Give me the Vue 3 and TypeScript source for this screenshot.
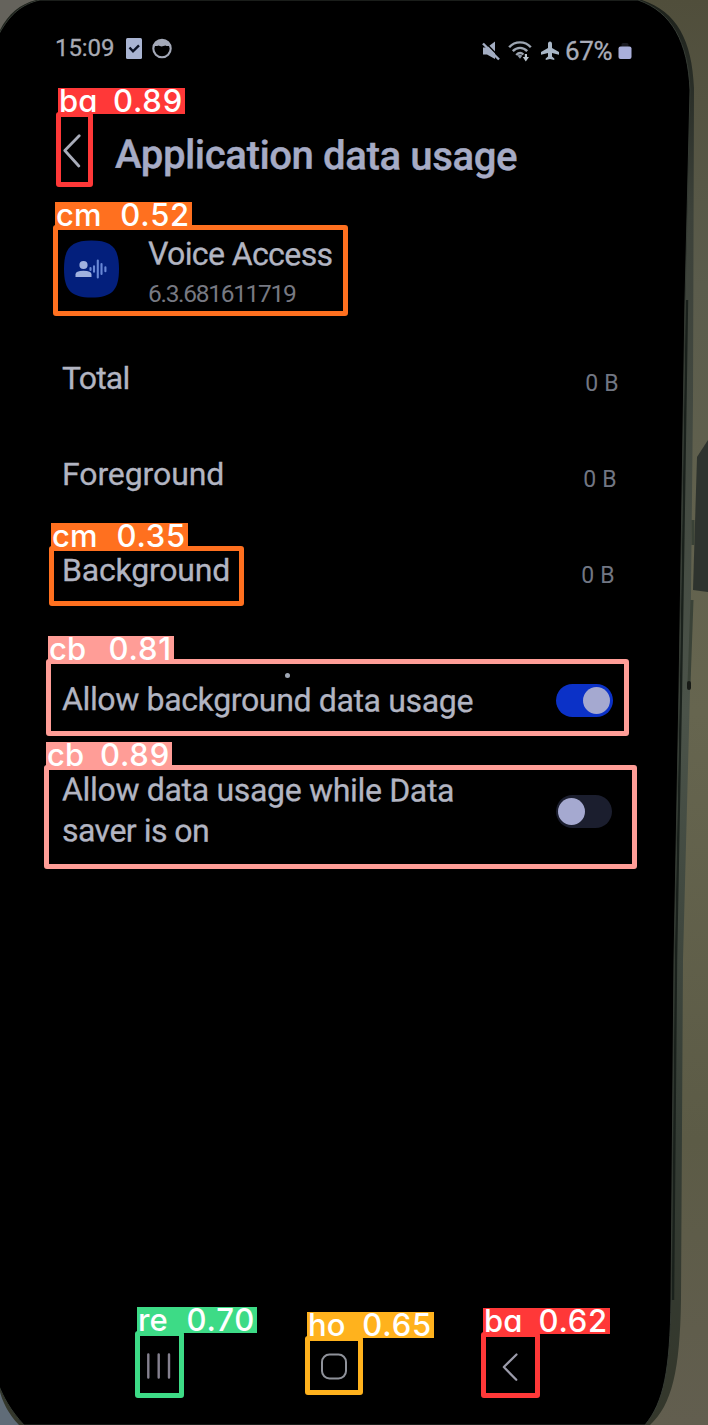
<script setup lang="ts">
interface Detection {
  id: string
  name: string
  score: string
  color: string
  x: number
  y: number
  w: number
  h: number
  labelWidth: number
  labelHeight: number
}

const detections: Detection[] = [
  { id: 'back-top', name: 'ba', score: '0.89', color: '#ff3838', x: 56, y: 112, w: 37, h: 75, labelWidth: 127, labelHeight: 26 },
  { id: 'app', name: 'cm', score: '0.52', color: '#ff701f', x: 53, y: 225, w: 295, h: 91, labelWidth: 137, labelHeight: 25 },
  { id: 'background', name: 'cm', score: '0.35', color: '#ff701f', x: 49, y: 546, w: 195, h: 60, labelWidth: 137, labelHeight: 25 },
  { id: 'allow-bg', name: 'cb', score: '0.81', color: '#ff9d97', x: 46, y: 659, w: 583, h: 77, labelWidth: 126, labelHeight: 25 },
  { id: 'allow-saver', name: 'cb', score: '0.89', color: '#ff9d97', x: 44, y: 765, w: 593, h: 104, labelWidth: 126, labelHeight: 25 },
  { id: 'recents', name: 're', score: '0.70', color: '#3ddb86', x: 135, y: 1331, w: 49, h: 67, labelWidth: 120, labelHeight: 26 },
  { id: 'home', name: 'ho', score: '0.65', color: '#ffb21d', x: 305, y: 1336, w: 58, h: 59, labelWidth: 127, labelHeight: 26 },
  { id: 'back-nav', name: 'ba', score: '0.62', color: '#ff3838', x: 481, y: 1332, w: 59, h: 66, labelWidth: 127, labelHeight: 26 },
]

const boxStyle = (d: Detection) => ({
  left: `${d.x}px`,
  top: `${d.y}px`,
  width: `${d.w}px`,
  height: `${d.h}px`,
  borderColor: d.color,
})

const labelStyle = (d: Detection) => ({
  left: `${d.x + 2}px`,
  top: `${d.y + 2 - d.labelHeight}px`,
  width: `${d.labelWidth}px`,
  height: `${d.labelHeight}px`,
  background: d.color,
})
</script>

<template>
  <div class="scene">
    <svg class="backdrop" width="708" height="1425" viewBox="0 0 708 1425" aria-hidden="true">
      <defs>
        <linearGradient id="wall" x1="0" y1="0" x2="0" y2="1">
          <stop offset="0" stop-color="#504e3b" />
          <stop offset="0.2" stop-color="#5b5c4c" />
          <stop offset="0.5" stop-color="#66654f" />
          <stop offset="0.8" stop-color="#5c5b46" />
          <stop offset="1" stop-color="#625e4f" />
        </linearGradient>
        <linearGradient id="frame" x1="0" y1="0" x2="0" y2="1">
          <stop offset="0" stop-color="#1d211b" />
          <stop offset="0.15" stop-color="#3c4139" />
          <stop offset="0.5" stop-color="#4b5349" />
          <stop offset="0.8" stop-color="#343c34" />
          <stop offset="1" stop-color="#34372b" />
        </linearGradient>
      </defs>
      <rect width="708" height="1425" fill="url(#wall)" />
      <path d="M0 0H45V40H0Z" fill="#65635c" />
      <path d="M0 1380H40V1425H0Z" fill="#606c78" />
      <path d="M708 440L697 457L693 590L708 592Z" fill="#2e332e" />
      <path d="M36 0H642C677 12 692 40 694 88L693 400L690 690L683 960L681 1300C680 1370 672 1405 650 1425H19C8 1414 2 1400 0 1392V30C8 14 20 4 36 0Z" fill="url(#frame)" />
      <path d="M687 300L681 690L676 960L673 1300" fill="none" stroke="#1a211c" stroke-width="2.4" />
      <path d="M693 520V545M692 600L689 684" fill="none" stroke="#3a4237" stroke-width="3" />
      <rect x="687" y="681" width="4" height="9" rx="2" fill="#171a16" />
      <path d="M40 0H638C672 12 688 42 690 90L685 300L679 690L674 960L671 1300C670 1370 664 1402 645 1425H24C10 1410 3 1396 -1 1386V34C10 14 22 4 40 0Z" fill="#000" stroke="#353b34" stroke-width="1" />
    </svg>

    <div class="screen">
      <header class="status">
        <div class="status-left">
          <span class="clock">15:09</span>
          <svg width="16" height="21" viewBox="0 0 16 21"><rect width="16" height="21" rx="1.5" fill="#a9b4d2" /><path d="M3.5 9.5l3.5 3.8 6-6" fill="none" stroke="#0b1224" stroke-width="2.4" /></svg>
          <svg width="20" height="21" viewBox="0 0 20 21"><circle cx="10" cy="10.5" r="8.7" fill="none" stroke="#a4a9b8" stroke-width="2.1" /><path d="M2 7.6Q4 2 10 1.7T18 7.6Q15.5 8.6 13.5 7.6Q9 9.2 6.5 7.6Q4 8.6 2 7.6Z" fill="#a4a9b8" /></svg>
        </div>
        <div class="status-right">
          <svg width="18" height="20" viewBox="0 0 18 20"><path d="M1 6.5H5L13 0.5V18L5 13.5H1Z" fill="#a3adc2" /><path d="M2.6 .8L18 16.4" stroke="#000" stroke-width="1.4" /><path d="M1 2.5L17 18.5" stroke="#a3adc2" stroke-width="2.4" /></svg>
          <svg width="24" height="21" viewBox="0 0 24 21"><path d="M1.2 6.2C7 -.2 17 -.2 22.8 6.2M4.8 10.2C9 5.8 15 5.8 19.2 10.2M8.2 14C10.6 11.6 13.4 11.6 15.4 13.5" fill="none" stroke="#9ca5b1" stroke-width="2.4" /><path d="M12 17.8l-2.5-3q2.5-2 4.8 0Z" fill="#8a93a2" /><path d="M16.8 13h2.2v3h2L17.8 20.5 14.8 16h2Z" fill="#bac4cd" /></svg>
          <svg width="20" height="20" viewBox="0 0 20 20"><path d="M10 .5C11.3 .5 12 1.6 12 3V7L19 11V13.7L12 12V15.5L14.3 17.4V19L10 18L5.7 19V17.4L8 15.5V12L1 13.7V11L8 7V3C8 1.6 8.7 .5 10 .5Z" fill="#a9b7c7" /></svg>
          <span class="percent">67%</span>
          <svg class="battery" width="14" height="19" viewBox="0 0 14 19"><path d="M3.5 5V2.5Q3.5 1 5 1H9Q10.5 1 10.5 2.5V5Z" fill="#191a21" /><rect x=".5" y="4.5" width="13" height="12.5" rx="2" fill="#a9afdb" /></svg>
        </div>
      </header>

      <div class="titlebar">
        <svg width="18" height="34" viewBox="0 0 18 34"><path d="M16.2 1.8L1.8 16.5L15.8 32" fill="none" stroke="#a9adba" stroke-width="2.8" stroke-linecap="round" stroke-linejoin="round" /></svg>
        <h1>Application data usage</h1>
      </div>

      <section class="app">
        <svg width="57" height="58" viewBox="0 0 57 58">
          <path d="M28.5 .5C49 .5 56 8 56 29S49 57.5 28.5 57.5S1 50 1 29S8 .5 28.5 .5Z" fill="#031f7c" />
          <circle cx="20.5" cy="25" r="4.1" fill="#a0b1df" /><path d="M12.5 37V34.5Q12.5 30.8 20.5 30.8T28.5 34.5V37Z" fill="#a0b1df" />
          <path d="M27.5 28v2M31 26.2v5.6M34.8 20.5v17M38.5 24v10M42.4 27.2v4" stroke="#6887d5" stroke-width="2.1" stroke-linecap="round" />
        </svg>
        <div class="app-text">
          <span class="app-name">Voice Access</span>
          <span class="version">6.3.681611719</span>
        </div>
      </section>

      <section class="stats">
        <div class="row"><span class="name total">Total</span><span class="value">0 B</span></div>
        <div class="row second"><span class="name foreground">Foreground</span><span class="value">0 B</span></div>
        <div class="row third"><span class="name background">Background</span><span class="value">0 B</span></div>
      </section>

      <section class="options">
        <div class="option first">
          <span class="name allow">Allow background data usage</span>
          <span class="toggle on"><i></i></span>
        </div>
        <div class="option last">
          <span class="name saver">Allow data usage while Data<br /><span class="saver-end">saver is on</span></span>
          <span class="toggle"><i></i></span>
        </div>
      </section>

      <nav class="navbar">
        <svg width="26" height="26" viewBox="0 0 26 26"><path d="M2.3 1.5v23M12.7 1.5v23M23 1.5v23" stroke="#85818f" stroke-width="2.4" stroke-linecap="round" /></svg>
        <svg class="home" width="28" height="28" viewBox="0 0 28 28"><rect x="2" y="1.5" width="24" height="24" rx="7.5" fill="none" stroke="#8f929a" stroke-width="2" /></svg>
        <svg class="nav-back" width="16" height="28" viewBox="0 0 16 28"><path d="M14.5 1.5L1.8 14L14.3 26.8" fill="none" stroke="#9b9baa" stroke-width="2.2" stroke-linecap="round" stroke-linejoin="round" /></svg>
      </nav>
    </div>

    <i class="speck"></i>
    <template v-for="d in detections" :key="d.id">
      <div class="box" :style="boxStyle(d)"></div>
      <div class="label" :style="labelStyle(d)"><span>{{ d.name }}</span><span class="score">{{ d.score }}</span></div>
    </template>
  </div>
</template>

<style>
body {
  margin: 0;
  background: #000;
}
</style>

<style scoped>
.scene {
  position: relative;
  width: 708px;
  height: 1425px;
  overflow: hidden;
  font-family: Roboto, "Liberation Sans", sans-serif;
  color: #b2b5c2;
}
.backdrop {
  position: absolute;
  inset: 0;
}
svg {
  display: block;
  flex: none;
}
.screen {
  position: relative;
  box-sizing: border-box;
  width: 676px;
  height: 1425px;
  padding: 34px 44px 0 55px;
  display: flex;
  flex-direction: column;
}
.status {
  height: 36px;
  display: flex;
  justify-content: space-between;
}
.status-left,
.status-right {
  display: flex;
  align-items: center;
  height: 28px;
}
.status-right {
  padding-top: 3px;
}
.clock {
  width: 59px;
  margin-right: 12px;
  font-size: 24px;
  letter-spacing: -0.1px;
  -webkit-text-stroke: 0.3px #a8aab3;
  color: #a8aab3;
}
.status-left svg + svg {
  margin-left: 10px;
}
.status-right svg {
  margin-right: 8px;
}
.status-right svg + svg + svg {
  margin-right: 5px;
}
.percent {
  width: 51px;
  font-size: 26px;
  letter-spacing: -0.4px;
  -webkit-text-stroke: 0.3px #a9acb9;
  color: #a9acb9;
}
.status-right .battery {
  margin: 0 0 0 2px;
}
.titlebar {
  height: 100px;
  box-sizing: border-box;
  display: flex;
  align-items: flex-start;
  margin-top: 35px;
  padding: 29px 0 0 8px;
}
h1 {
  margin: -1px 0 0 34px;
  font-size: 40px;
  line-height: 46px;
  font-weight: 500;
  letter-spacing: -0.35px;
  white-space: nowrap;
  color: #a6abc5;
  -webkit-text-stroke: 0.4px #a6abc5;
  transform: rotate(0.35deg);
}
.app {
  height: 90px;
  padding: 35px 0 0 8px;
  display: flex;
}
.app-text {
  display: flex;
  flex-direction: column;
  margin-left: 28px;
  align-items: flex-start;
}
.app-name {
  font-size: 32px;
  line-height: 38px;
  margin-top: -5px;
  letter-spacing: -0.6px;
  -webkit-text-stroke: 0.3px #b2b5c2;
  transform: rotate(0.3deg);
}
.version {
  font-size: 24.5px;
  line-height: 30px;
  margin-top: 6px;
  letter-spacing: -1.3px;
  color: #777982;
}
.stats {
  height: 320px;
}
.row {
  height: 96px;
  padding: 0 0 0 7px;
  display: flex;
  justify-content: space-between;
  align-items: center;
}
.name {
  font-size: 32px;
  line-height: 41px;
  white-space: nowrap;
  -webkit-text-stroke: 0.3px #b2b5c2;
}
.total {
  letter-spacing: -0.8px;
}
.foreground {
  letter-spacing: -0.1px;
}
.background {
  letter-spacing: -0.2px;
}
.allow {
  letter-spacing: -0.35px;
  transform: rotate(0.3deg);
}
.saver {
  letter-spacing: -0.32px;
  transform: rotate(0.2deg);
}
.saver-end {
  letter-spacing: -0.5px;
}
.value {
  font-size: 23px;
  letter-spacing: 0.3px;
  margin: 10px 13px 0 0;
  color: #717683;
}
.second .value {
  margin-right: 15px;
}
.third .value {
  margin-right: 17px;
}
.option {
  display: flex;
  justify-content: space-between;
  align-items: center;
  padding: 0 19px 0 7px;
}
.first {
  height: 100px;
}
.last {
  height: 122px;
  padding-right: 20px;
}
.toggle {
  width: 57px;
  height: 33px;
  box-sizing: border-box;
  padding: 3px;
  border-radius: 17px;
  display: flex;
  background: #1b1e2e;
}
.last .toggle {
  width: 56px;
  padding-left: 2px;
}
.toggle i {
  width: 27px;
  height: 27px;
  border-radius: 50%;
  background: #a5a9d0;
}
.on {
  justify-content: flex-end;
  background: #0b31c7;
}
.navbar {
  margin-top: auto;
  height: 72px;
  padding-left: 91px;
  display: flex;
}
.home {
  margin-left: 148px;
}
.nav-back {
  margin-left: 154px;
}
.speck {
  position: absolute;
  left: 285px;
  top: 673px;
  width: 5px;
  height: 5px;
  border-radius: 50%;
  background: #a0a8b5;
}
.box {
  position: absolute;
  box-sizing: border-box;
  border: 5px solid;
  border-radius: 3px;
}
.label {
  position: absolute;
  box-sizing: border-box;
  padding: 0 2px 0 1px;
  display: flex;
  justify-content: space-between;
  align-items: center;
  font-family: Inter, sans-serif;
  font-feature-settings: "cv11";
  font-size: 31px;
  line-height: 26px;
  font-weight: 500;
  white-space: nowrap;
  color: #fff;
}
.score {
  letter-spacing: 0.8px;
}
</style>
